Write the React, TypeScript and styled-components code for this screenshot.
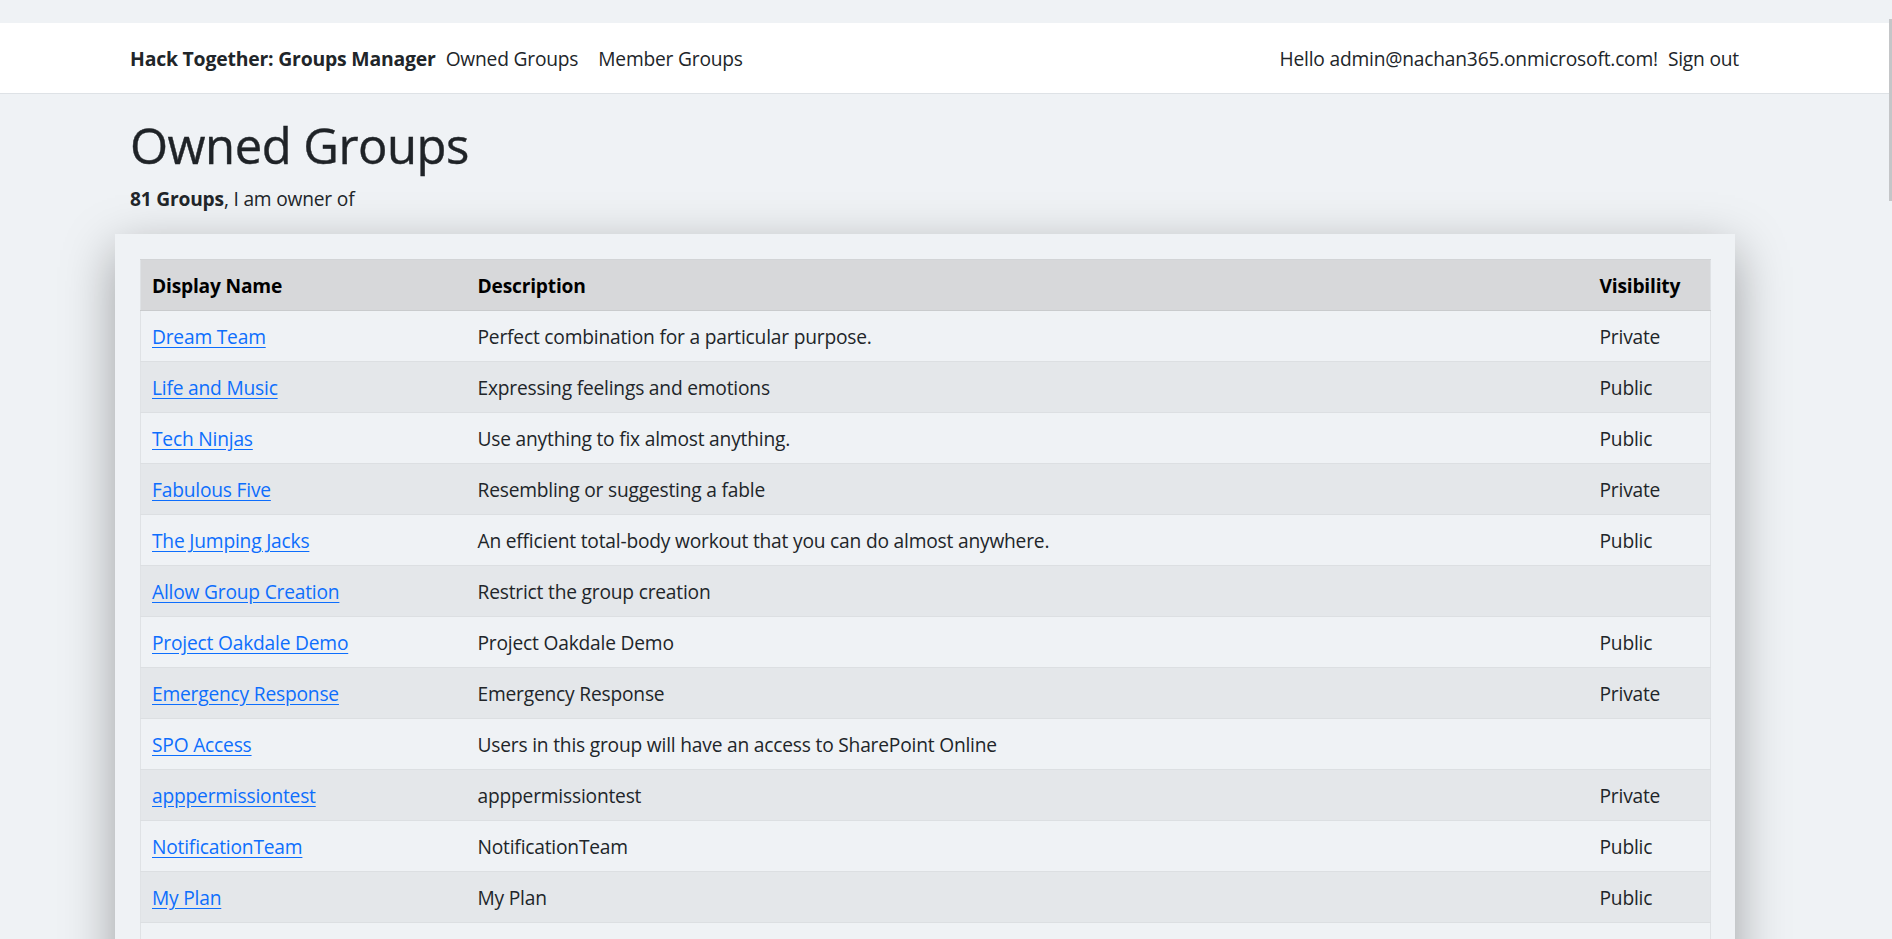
import React from "react";
import styled, { createGlobalStyle } from "styled-components";

const Global = createGlobalStyle`
  html, body {
    margin: 0;
    padding: 0;
    background: #eff2f5;
    overflow: hidden;
    height: 100%;
  }
  body {
    font-family: "Open Sans", "Noto Sans", sans-serif;
    color: #212529;
  }
  * { box-sizing: border-box; }
`;

const Page = styled.div`
  padding-top: 23px;
  min-height: 100vh;
`;

const Navbar = styled.nav`
  height: 71px;
  background: #ffffff;
  border-bottom: 1px solid #dee2e6;
  display: flex;
  align-items: center;
`;

const NavInner = styled.div`
  width: 1609px;
  margin-left: 130px;
  display: flex;
  align-items: center;
  justify-content: space-between;
`;

const NavGroup = styled.div`
  display: flex;
  align-items: center;
`;

const Brand = styled.a`
  font-weight: 700;
  font-size: 19.4px;
  color: #212529;
  text-decoration: none;
  letter-spacing: -0.2px;
`;

const NavLink = styled.a<{ $last?: boolean }>`
  font-size: 19.2px;
  color: #212529;
  text-decoration: none;
  padding: ${(p) => (p.$last ? "0 0 0 10px" : "0 10px")};
  letter-spacing: -0.2px;
`;

const Greeting = styled.span`
  font-size: 19.2px;
  color: #212529;
  letter-spacing: -0.2px;
`;

const Container = styled.main`
  width: 1609px;
  margin-left: 130px;
`;

const Title = styled.h1`
  margin: 0;
  padding-top: 22px;
  font-size: 49px;
  font-weight: 500;
  line-height: 58px;
  color: #1f2327;
  letter-spacing: -0.5px;
  -webkit-text-stroke: 0.4px #1f2327;
`;

const Subtitle = styled.p`
  margin: 11px 0 0;
  font-size: 19.2px;
  line-height: 28px;
  letter-spacing: -0.2px;
`;

const Card = styled.section`
  margin-top: 21px;
  margin-left: -15px;
  width: 1620px;
  padding: 25px;
  background: #eff2f5;
  box-shadow: 0 16px 48px rgba(0, 0, 0, 0.34);
`;

const Table = styled.table`
  width: 100%;
  border-collapse: collapse;
  table-layout: fixed;
  border-left: 1px solid #dfe2e5;
  border-right: 1px solid #dfe2e5;
  font-size: 19.2px;
  letter-spacing: -0.2px;
`;

const HeadCell = styled.th<{ $w: number }>`
  width: ${(p) => p.$w}px;
  text-align: left;
  font-weight: 700;
  color: #000;
  background: #d7d8da;
  height: 51px;
  padding: 0 11px;
  border-top: 1px solid #d2d4d6;
  border-bottom: 1px solid #c9cbcd;
`;

const Row = styled.tr<{ $striped: boolean }>`
  background: ${(p) => (p.$striped ? "#e4e7ea" : "#eff2f5")};
`;

const Cell = styled.td`
  height: 51px;
  padding: 0 11px;
  border-bottom: 1px solid #dcdfe2;
  color: #212529;
  white-space: nowrap;
`;

const GroupLink = styled.a`
  color: #0d6efd;
  text-decoration: underline;
  text-underline-offset: 3px;
`;

const ScrollThumb = styled.div`
  position: fixed;
  top: 19px;
  right: 0;
  width: 3px;
  height: 182px;
  background: #c4c6c8;
`;

const groups: [string, string, string][] = [
  ["Dream Team", "Perfect combination for a particular purpose.", "Private"],
  ["Life and Music", "Expressing feelings and emotions", "Public"],
  ["Tech Ninjas", "Use anything to fix almost anything.", "Public"],
  ["Fabulous Five", "Resembling or suggesting a fable", "Private"],
  ["The Jumping Jacks", "An efficient total-body workout that you can do almost anywhere.", "Public"],
  ["Allow Group Creation", "Restrict the group creation", ""],
  ["Project Oakdale Demo", "Project Oakdale Demo", "Public"],
  ["Emergency Response", "Emergency Response", "Private"],
  ["SPO Access", "Users in this group will have an access to SharePoint Online", ""],
  ["apppermissiontest", "apppermissiontest", "Private"],
  ["NotificationTeam", "NotificationTeam", "Public"],
  ["My Plan", "My Plan", "Public"],
  ["", "", ""],
];

export default function App() {
  return (
    <>
      <Global />
      <Page>
        <Navbar>
          <NavInner>
            <NavGroup>
              <Brand href="#">Hack Together: Groups Manager</Brand>
              <NavLink href="#">Owned Groups</NavLink>
              <NavLink href="#">Member Groups</NavLink>
            </NavGroup>
            <NavGroup>
              <Greeting>Hello admin@nachan365.onmicrosoft.com!</Greeting>
              <NavLink href="#" $last>
                Sign out
              </NavLink>
            </NavGroup>
          </NavInner>
        </Navbar>
        <Container>
          <Title>Owned Groups</Title>
          <Subtitle>
            <strong>81 Groups</strong>, I am owner of
          </Subtitle>
          <Card>
            <Table>
              <thead>
                <tr>
                  <HeadCell $w={326}>Display Name</HeadCell>
                  <HeadCell $w={1122}>Description</HeadCell>
                  <HeadCell $w={122}>Visibility</HeadCell>
                </tr>
              </thead>
              <tbody>
                {groups.map(([name, desc, vis], i) => (
                  <Row key={i} $striped={i % 2 === 1}>
                    <Cell>{name && <GroupLink href="#">{name}</GroupLink>}</Cell>
                    <Cell>{desc}</Cell>
                    <Cell>{vis}</Cell>
                  </Row>
                ))}
              </tbody>
            </Table>
          </Card>
        </Container>
        <ScrollThumb />
      </Page>
    </>
  );
}
